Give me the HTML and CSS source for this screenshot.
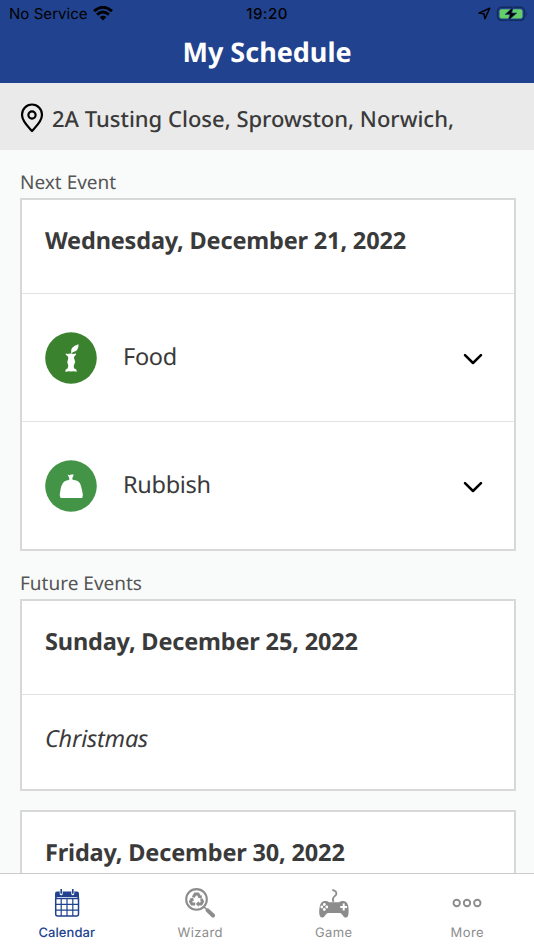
FILE: index.html
```html
<!DOCTYPE html>
<html lang="en">
<head>
<meta charset="utf-8">
<title>My Schedule</title>
<link rel="stylesheet" href="styles.css">
</head>
<body>
<div class="app">
  <header class="header">
    <div class="status">
      <div class="status-left"><span class="carrier">No Service</span>
        <svg width="20" height="15" viewBox="0 0 20 15" fill="none" stroke="#000" stroke-width="2.900"><path d="M1 5.200Q10-2.600 19 5.200M4.100 8.700Q10 3.500 15.900 8.700"/><path d="M10 14.400L6.700 11.100Q10 8.500 13.300 11.100Z" fill="#000" stroke="none"/></svg>
      </div>
      <span class="clock">19:20</span>
      <div class="status-right">
        <svg width="13" height="13" viewBox="0 0 13 13" fill="none" stroke="#000" stroke-width="1.500" stroke-linejoin="round"><path d="M11.700 1.200L1 6.100L6 6.800L6.900 11.700Z"/></svg>
        <svg width="33" height="16" viewBox="0 0 33 16"><rect x="1.500" y="1.300" width="27" height="13" rx="4" fill="none" stroke="#122b62" stroke-width="1.500"/><rect x="3.500" y="3.200" width="23" height="9.300" rx="2" fill="#65cf67"/><path d="M30 5.500Q32 7.800 30 10.200Z" fill="#122b62"/><path d="M17.300 1L9 8.400H14L12 14.800L20.800 7H15.700Z" fill="#000" stroke="#21428e" stroke-width=".7"/></svg>
      </div>
    </div>
    <h1 class="title">My Schedule</h1>
  </header>
  <div class="address">
    <svg width="24" height="30" viewBox="0 0 24 30" fill="none" stroke="#000" stroke-width="2.200" stroke-linejoin="round"><path d="M12 28C9 24.500 2 18.500 2 11.700A10 10.200 0 0 1 22 11.700C22 18.500 15 24.500 12 28Z"/><circle cx="12" cy="12" r="3.600"/></svg>
    <span>2A Tusting Close, Sprowston, Norwich,</span>
  </div>
  <main class="content">
    <h2 class="section">Next Event</h2>
    <section class="card">
      <h3 class="date">Wednesday, December 21, 2022</h3>
      <div class="item">
        <svg class="badge" viewBox="0 0 52 52"><circle cx="26" cy="26" r="25.800" fill="#3b822e"/><path d="M20.700 21.500Q22.500 22.300 25.200 21.600Q28 22.400 31 21.500Q31.500 23.200 29.400 24.200Q28.200 26.500 29.700 28.300Q30.800 29.900 29.600 31.600Q28 34 29.200 36.500Q32.300 37.300 31.600 39.700Q28.900 38.700 26 39.500Q23 38.700 20.600 39.900Q19.800 37.500 22.600 36.600Q24 34.500 22.800 32Q21.700 29.900 22.800 28.200Q24 26 22.600 24Q20.300 23.200 20.700 21.500Z" fill="#fff"/><path d="M26.200 21.200Q24.700 14.800 33.500 12.200Q34 19 27.600 20.200L27 21.800Z" fill="#fff"/></svg>
        <span class="name">Food</span>
        <svg class="chevron" viewBox="0 0 20 14"><path d="M2 3.200L10 11L18 3.200"/></svg>
      </div>
      <div class="item">
        <svg class="badge" viewBox="0 0 52 52"><circle cx="26" cy="26" r="25.800" fill="#439447"/><path d="M22.600 14.500L24.500 15.300L26 14.500L28.800 14.600L27.200 18.500L28 20Q33.500 20 35.300 24Q36.500 27 37.200 31Q38.500 35 37.200 38H15.600Q14 35 15.300 31Q16 25 19 21.800Q21.300 20 24 20L24.400 18.500Z" fill="#fff"/></svg>
        <span class="name">Rubbish</span>
        <svg class="chevron" viewBox="0 0 20 14"><path d="M2 3.200L10 11L18 3.200"/></svg>
      </div>
    </section>
    <h2 class="section">Future Events</h2>
    <section class="card">
      <h3 class="date">Sunday, December 25, 2022</h3>
      <p class="note">Christmas</p>
    </section>
    <section class="card">
      <h3 class="date">Friday, December 30, 2022</h3>
      <p class="note"></p>
    </section>
  </main>
  <nav class="tabs">
    <div class="tab active">
      <svg width="30" height="30" viewBox="0 0 30 30" fill="none" stroke="currentColor"><path d="M3 9V5.500Q3 3.500 5 3.500H25Q27 3.500 27 5.500V9Z" fill="currentColor" stroke="none"/><rect x="3.700" y="8.500" width="22.800" height="19.500" rx="2" stroke-width="1.500"/><path d="M4 10.700H26M4 16.300H26M4 22.200H26M9.200 10V28M15 10V28M20.800 10V28" stroke-width="1.200"/><path d="M9.200 4V5.800M20.800 4V5.800" stroke="#fff" stroke-width="3" stroke-linecap="round"/><path d="M9.200 1V5.800M20.800 1V5.800" stroke-width="1.600"/></svg>
      <span>Calendar</span>
    </div>
    <div class="tab">
      <svg width="30" height="30" viewBox="0 0 30 30" fill="none" stroke="currentColor"><circle cx="11.500" cy="11.400" r="10.300" stroke-width="2.100"/><path d="M19.200 19L22.500 22.200" stroke-width="1.600"/><path d="M22.700 22.400L28 27.500" stroke-width="4" stroke-linecap="round"/><g stroke-width="3"><path d="M8.200 9.300L10.200 6H13L14.600 8.700"/><path d="M16.400 11L17.500 13.600L16.100 16H12.700"/><path d="M10.200 16H6.900L5.500 13.600L7 11.300"/></g><g fill="currentColor" stroke="none"><path d="M16.900 7L16.700 11L12.800 9.500Z"/><path d="M13.700 13.100V18.700L10.900 15.900Z"/><path d="M4.300 10.900L8 9.500L9.100 13.100Z"/></g></svg>
      <span>Wizard</span>
    </div>
    <div class="tab">
      <svg width="30" height="30" viewBox="0 0 30 30" fill="none"><path d="M14.500 14C11.500 8.200 18.500 8.500 17.400 4.700Q17 3 13.300 1.800" stroke="currentColor" stroke-width="1.800"/><path d="M5.300 13Q8.300 12.600 10 14.200H20Q22 12.600 25 13Q28.700 13.700 29.400 19Q30.400 29.500 27 29.500C24 29.500 23.400 24.900 20.800 24.900H9.200C6.600 24.900 6 29.500 3 29.500C-.4 29.500-.3 22 1 17.500Q2 13.500 5.300 13Z" fill="currentColor"/><path d="M21.300 19H28M24.700 15.600V22.400" stroke="#fff" stroke-width="2"/><g fill="#fff"><circle cx="5.300" cy="16.500" r="1.400"/><circle cx="5.300" cy="21.500" r="1.400"/><circle cx="2.800" cy="19" r="1.400"/><circle cx="7.800" cy="19" r="1.400"/></g></svg>
      <span>Game</span>
    </div>
    <div class="tab">
      <svg width="30" height="30" viewBox="0 0 30 30" fill="none" stroke="currentColor" stroke-width="1.900"><circle cx="4.700" cy="15" r="3.200"/><circle cx="15" cy="15" r="3.200"/><circle cx="25.300" cy="15" r="3.200"/></svg>
      <span>More</span>
    </div>
  </nav>
</div>
</body>
</html>
```
FILE: styles.css
```css
* { box-sizing: border-box; }
body { margin: 0; font-family: "Noto Sans", "Open Sans", sans-serif; color: #3a3a3a; text-rendering: geometricPrecision; }
h1, h2, h3, p { margin: 0; }
svg { display: block; flex: none; }
.app { display: flex; flex-direction: column; height: 950px; overflow: hidden; background: #f9fbfa; }
.header { flex: none; height: 83px; background: #21428e; }
.status { display: grid; grid-template-columns: 1fr auto 1fr; align-items: center; height: 27px; padding: 0 5px 0 9px; font: 15px/27px Inter, sans-serif; color: #000; }
.status-left, .status-right { display: flex; align-items: center; gap: 5px; }
.status-right { justify-content: flex-end; }
.carrier { letter-spacing: .05px; }
.clock { font-weight: 500; letter-spacing: .5px; margin-right: 4px; }
.title { font-size: 27px; line-height: 50px; font-weight: 700; text-align: center; color: #fff; }
.address { flex: none; display: flex; align-items: center; gap: 8px; height: 67px; padding: 3px 20px 0; background: #eaeaea; font-size: 22px; font-weight: 500; white-space: nowrap; }
.address span { padding-top: 1px; }
.content { flex: 1; min-height: 0; overflow: hidden; padding: 17px 18px 0 20px; }
.section { height: 31px; font-size: 19px; line-height: 31px; font-weight: 400; color: #555; }
.card { background: #fff; border: 2px solid #d8d8d8; margin-bottom: 20px; }
.card + .section { margin-top: -3px; }
.section ~ .section { height: 31px; }
.section ~ .section + .card { margin-bottom: 19px; }
.date { height: 93px; padding: 23px 24px 0 23px; font-size: 23.500px; line-height: 34px; font-weight: 700; letter-spacing: -.17px; white-space: nowrap; }
.item { display: flex; align-items: center; height: 128px; padding: 0 31px 0 23px; border-top: 1px solid #e2e2e2; }
.badge { width: 52px; height: 52px; }
.name { flex: 1; margin: -4px 0 0 26px; font-size: 23.500px; letter-spacing: -.3px; }
.chevron { width: 20px; height: 14px; margin-top: 3px; fill: none; stroke: #000; stroke-width: 2.500; stroke-linecap: round; stroke-linejoin: round; }
.note { height: 95px; padding: 26px 24px 0 23px; border-top: 1px solid #e2e2e2; font-size: 23.500px; line-height: 34px; letter-spacing: -.2px; font-style: italic; }
.tabs { flex: none; display: grid; grid-template-columns: repeat(4, 1fr); height: 77px; background: #fff; border-top: 1px solid #ccc; }
.tab { display: flex; flex-direction: column; align-items: center; padding-top: 14px; font: 13px/20px Inter, sans-serif; letter-spacing: .4px; color: #8c8c8c; }
.tab span { margin-top: 5px; }
.active { color: #21428e; font-weight: 500; letter-spacing: .05px; }
```
